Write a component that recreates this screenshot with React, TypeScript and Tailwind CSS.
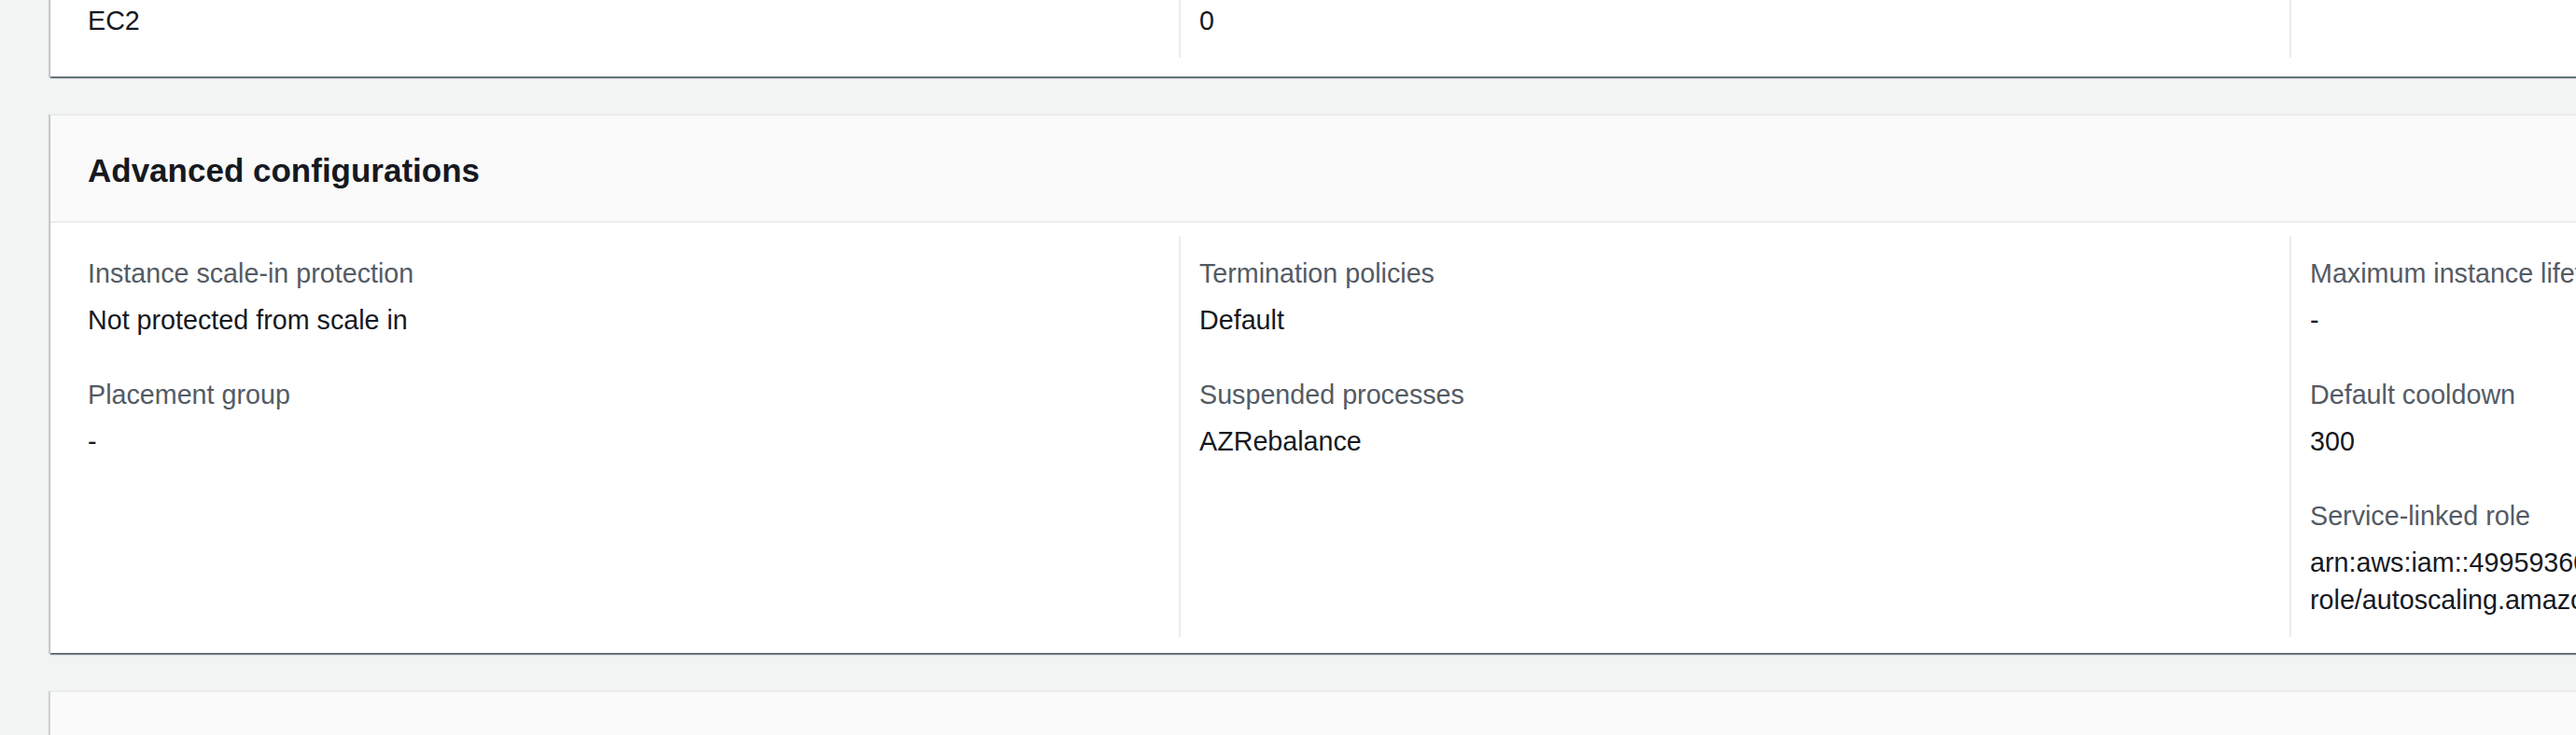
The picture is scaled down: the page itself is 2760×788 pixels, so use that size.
import React from "react";

type Pair = { label?: string; value: React.ReactNode };

const font = { fontFamily: '"Liberation Sans", Arial, sans-serif' };

function KeyValue({ label, value }: Pair) {
  return (
    <div className="flex flex-col gap-[10px]">
      {label && (
        <div className="text-[28.7px] leading-[40px] text-[#545b64]">{label}</div>
      )}
      <div className="text-[28.7px] leading-[40px] text-[#16191f]">{value}</div>
    </div>
  );
}

function Column({ items, first }: { items: Pair[]; first?: boolean }) {
  return (
    <div
      className={
        first
          ? "w-[1169px] shrink-0 pr-[20px] pt-[20px] pb-[20px] flex flex-col gap-[40px]"
          : "w-[1190px] shrink-0 border-l-2 border-[#eaeded] pl-[20px] pr-[20px] pt-[20px] pb-[20px] flex flex-col gap-[40px]"
      }
    >
      {items.map((it, i) => (
        <KeyValue key={i} label={it.label} value={it.value} />
      ))}
    </div>
  );
}

function Card({ title, columns }: { title?: string; columns: Pair[][] }) {
  return (
    <div className="w-[3629px] bg-white border-t-2 border-[#eaeded] shadow-[0_2px_1px_0_rgba(0,28,36,0.5),2px_1px_1px_0_rgba(0,28,36,0.15),-2px_1px_1px_0_rgba(0,28,36,0.15)]">
      {title && (
        <div className="h-[115px] bg-[#fafafa] border-b-2 border-[#eaeded] pl-[40px] pt-[4px] flex items-center">
          <h2 className="text-[35px] font-bold leading-[44px] text-[#16191f]">
            {title}
          </h2>
        </div>
      )}
      <div className={title ? "flex pl-[40px] pt-[14px] pb-[17px]" : "flex pl-[40px] pt-[10px] pb-[20px]"}>
        {columns.map((col, i) => (
          <Column key={i} items={col} first={i === 0} />
        ))}
      </div>
    </div>
  );
}

export default function App() {
  return (
    <div
      className="w-[2760px] h-[788px] overflow-hidden bg-[#f2f3f3]"
      style={font}
    >
      <div className="ml-[54px] -mt-[30px] flex flex-col gap-[40px]">
        {/* health checks card, only its last row is in view */}
        <Card columns={[[{ value: "EC2" }], [{ value: "0" }], []]} />
        <Card
          title="Advanced configurations"
          columns={[
            [
              {
                label: "Instance scale-in protection",
                value: "Not protected from scale in",
              },
              { label: "Placement group", value: "-" },
            ],
            [
              { label: "Termination policies", value: "Default" },
              { label: "Suspended processes", value: "AZRebalance" },
            ],
            [
              { label: "Maximum instance lifetime", value: "-" },
              { label: "Default cooldown", value: "300" },
              {
                label: "Service-linked role",
                value: (
                  <>
                    arn:aws:iam::499593606352:role/aws-service-
                    <br />
                    role/autoscaling.amazonaws.com/AWSServiceRoleForAutoScaling
                  </>
                ),
              },
            ],
          ]}
        />
        <div className="w-[3629px] h-[120px] bg-[#fafafa] border-t-2 border-[#eaeded] shadow-[2px_1px_1px_0_rgba(0,28,36,0.15),-2px_1px_1px_0_rgba(0,28,36,0.15)]" />
      </div>
    </div>
  );
}
